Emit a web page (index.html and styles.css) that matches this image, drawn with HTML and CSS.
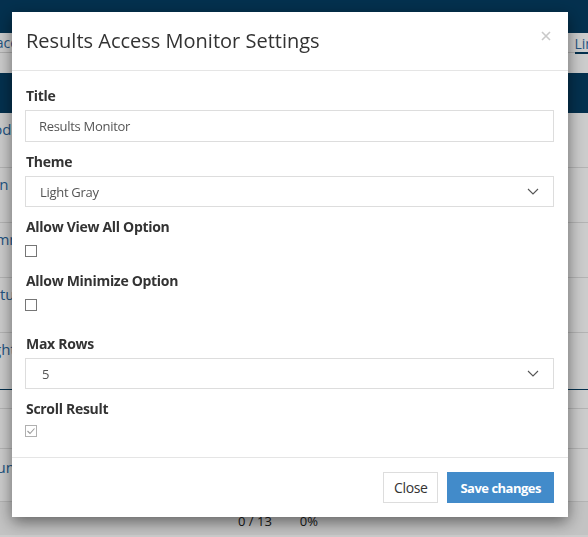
FILE: index.html
```html
<!DOCTYPE html>
<html lang="en">
	<head>
		<meta charset="utf-8">
		<title>Results Access Monitor Settings</title>
		<link rel="stylesheet" href="styles.css">
	</head>
	<body>
		<!-- page behind the dialog -->
		<div class="page">
			<div class="navbar"></div>
			<div class="tabs">
				<span class="tab">Workspace</span>
				<span class="tab tab-active">Links</span>
			</div>
			<div class="subbar"></div>
			<div class="table-head"></div>
			<div class="row"><span class="cell-link">Product</span></div>
			<div class="row"><span class="cell-link">Plan</span></div>
			<div class="row"><span class="cell-link">Summary</span></div>
			<div class="row"><span class="cell-link">Status</span></div>
			<div class="row row-end"><span class="cell-link">Nights</span></div>
			<div class="row row-thin"></div>
			<div class="row row-mid"></div>
			<div class="row row-last"><span class="cell-link">Count</span></div>
			<div class="totals">
				<span class="totals-count">0 / 13</span>
				<span class="totals-pct">0%</span>
			</div>
		</div>

		<div class="backdrop"></div>

		<div class="modal">
			<div class="modal-header">
				<h4 class="modal-title">Results Access Monitor Settings</h4>
				<svg class="modal-close" width="10" height="10" viewBox="0 0 10 10">
					<path d="M1 1L9 9M9 1L1 9" stroke="#c9c9c9" stroke-width="1.6" fill="none"/>
				</svg>
			</div>
			<div class="modal-body">
				<div class="form-group">
					<label class="control-label">Title</label>
					<div class="form-control">Results Monitor</div>
				</div>
				<div class="form-group">
					<label class="control-label">Theme</label>
					<div class="form-control form-select">
						<span>Light Gray</span>
						<svg class="chevron" width="12" height="7" viewBox="0 0 12 7">
							<path d="M1 1L6 6L11 1" stroke="#555" stroke-width="1.1" fill="none"/>
						</svg>
					</div>
				</div>
				<div class="form-group form-group-check">
					<label class="control-label">Allow View All Option</label>
					<span class="checkbox"></span>
				</div>
				<div class="form-group form-group-wide">
					<label class="control-label">Allow Minimize Option</label>
					<span class="checkbox"></span>
				</div>
				<div class="form-group">
					<label class="control-label">Max Rows</label>
					<div class="form-control form-select form-select-num">
						<span>5</span>
						<svg class="chevron" width="12" height="7" viewBox="0 0 12 7">
							<path d="M1 1L6 6L11 1" stroke="#555" stroke-width="1.1" fill="none"/>
						</svg>
					</div>
				</div>
				<div class="form-group form-group-last">
					<label class="control-label">Scroll Result</label>
					<span class="checkbox checkbox-checked">
						<svg width="10" height="10" viewBox="0 0 10 10">
							<path d="M1.5 5L4 7.5L8.5 2.5" stroke="#9a9a9a" stroke-width="1.1" fill="none"/>
						</svg>
					</span>
				</div>
			</div>
			<div class="modal-footer">
				<button class="btn btn-default">Close</button>
				<button class="btn btn-primary">Save changes</button>
			</div>
		</div>
	</body>
</html>
```

FILE: styles.css
```css
html, body {
	margin: 0;
	padding: 0;
	background: #ffffff;
}
body {
	font-family: "Open Sans", "Noto Sans", sans-serif;
	font-size: 13px;
	color: #333333;
	overflow: hidden;
}

/* page behind */
.page {
	height: 537px;
}
.navbar {
	height: 33px;
	background: #053d62;
}
.tabs {
	height: 19px;
	border-bottom: 1px solid #d8d8d8;
	display: flex;
	justify-content: space-between;
	align-items: center;
	font-size: 14px;
}
.tab {
	color: #2c6aa3;
	margin-left: -54px;
}
.tab-active {
	margin-left: 0;
	margin-right: -20px;
	color: #2c6aa3;
	border-bottom: 2px solid #053d62;
	line-height: 17px;
	padding-top: 4px;
}
.subbar {
	height: 20px;
}
.table-head {
	height: 40px;
	background: #053d62;
}
.row {
	border-bottom: 1px solid #e0e0e0;
	padding-top: 6px;
	box-sizing: border-box;
	height: 55px;
}
.row-end {
	height: 57px;
	border-bottom: 1px solid #053d62;
}
.row-thin {
	height: 19px;
}
.row-mid {
	height: 40px;
}
.row-last {
	height: 53px;
	padding-top: 8px;
}
.cell-link {
	color: #2c6aa3;
	font-size: 15px;
	margin-left: -22px;
}
.totals {
	height: 33px;
	background: #f4f4f4;
	display: flex;
	align-items: center;
	padding-top: 4px;
	box-sizing: border-box;
	font-size: 13px;
	color: #222;
}
.totals-count {
	margin-left: 238px;
}
.totals-pct {
	margin-left: 28px;
}

/* dialog */
.backdrop {
	position: fixed;
	top: 0;
	left: 0;
	right: 0;
	bottom: 0;
	background: rgba(0, 0, 0, 0.2);
}
.modal {
	position: fixed;
	top: 12px;
	left: 12px;
	width: 556px;
	background: #ffffff;
	box-shadow: 0 5px 15px rgba(0, 0, 0, 0.5);
}
.modal-header {
	display: flex;
	justify-content: space-between;
	align-items: center;
	padding: 15px 17px 15px 14px;
	border-bottom: 1px solid #e5e5e5;
}
.modal-title {
	margin: 0;
	font-size: 20px;
	font-weight: normal;
	line-height: 28px;
	color: #333333;
}
.modal-close {
	margin-top: -10px;
}
.modal-body {
	padding: 15px 14px 20px 13px;
}
.form-group {
	margin-bottom: 10px;
}
.form-group-check {
	margin-bottom: 14px;
}
.form-group-wide {
	margin-bottom: 23px;
}
.form-group-last {
	margin-bottom: 0;
}
.control-label {
	display: block;
	font-size: 14px;
	font-weight: bold;
	line-height: 20px;
	letter-spacing: -0.3px;
	margin: 0 0 4px 1px;
	color: #333333;
}
.form-control {
	height: 32px;
	border: 1px solid #dddddd;
	box-sizing: border-box;
	padding: 0 13px;
	display: flex;
	align-items: center;
	color: #555555;
	font-size: 13px;
	letter-spacing: -0.3px;
}
.form-select {
	height: 31px;
	justify-content: space-between;
	padding: 0 14px 0 14px;
}
.form-select-num {
	padding-left: 16px;
}
.chevron {
	display: block;
}
.checkbox {
	display: block;
	width: 12px;
	height: 12px;
	border: 1px solid #767676;
	box-sizing: border-box;
	margin-top: 8px;
}
.checkbox-checked {
	border-color: #b0b0b0;
	margin-top: 6px;
	display: flex;
	align-items: center;
	justify-content: center;
}
.modal-footer {
	display: flex;
	justify-content: flex-end;
	gap: 9px;
	padding: 14px;
	border-top: 1px solid #e5e5e5;
}
.btn {
	height: 31px;
	font-family: "Open Sans", "Noto Sans", sans-serif;
	font-size: 14px;
	letter-spacing: -0.4px;
	padding: 0 10px;
	border: 1px solid #dddddd;
	background: #ffffff;
	color: #333333;
	cursor: pointer;
}
.btn-primary {
	font-size: 13px;
	letter-spacing: -0.5px;
	background: #428bca;
	border-color: #428bca;
	color: #ffffff;
	font-weight: bold;
	padding: 0 12px;
}
```
